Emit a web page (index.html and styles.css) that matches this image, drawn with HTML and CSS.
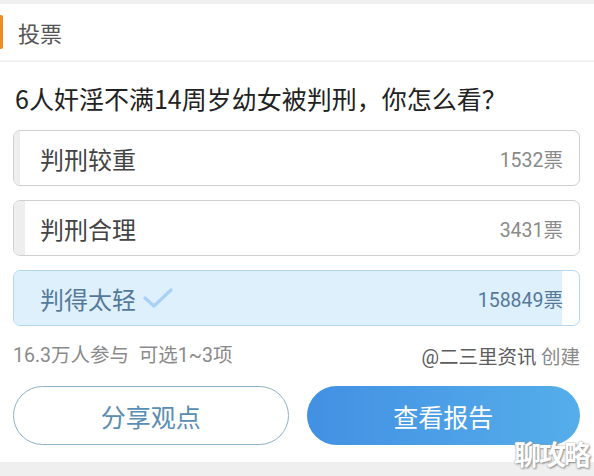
FILE: index.html
```html
<!DOCTYPE html>
<html lang="zh-CN">
<head>
  <meta charset="UTF-8">
  <meta name="viewport" content="width=device-width, initial-scale=1.0">
  <title>投票</title>
  <link rel="stylesheet" href="styles.css">
</head>
<body>

  <div class="top-band"></div>

  <!-- 标题 -->
  <div class="header">
    <span class="header-mark"></span>
    <span class="header-title">投票</span>
  </div>

  <div class="vote">
    <h1 class="question">6人奸淫不满14周岁幼女被判刑，你怎么看？</h1>

    <!-- 选项 -->
    <div class="options">
      <div class="option">
        <div class="fill" style="width: 1%"></div>
        <span class="label">判刑较重</span>
        <span class="count">1532票</span>
      </div>
      <div class="option">
        <div class="fill" style="width: 2%"></div>
        <span class="label">判刑合理</span>
        <span class="count">3431票</span>
      </div>
      <div class="option selected">
        <div class="fill" style="width: 97%"></div>
        <span class="label">判得太轻
          <svg class="check" width="30" height="22" viewBox="0 0 30 22">
            <path d="M2 11 L11 19 L28 3" fill="none" stroke="#a9d0f5" stroke-width="3.2" stroke-linecap="round" stroke-linejoin="round"/>
          </svg>
        </span>
        <span class="count">158849票</span>
      </div>
    </div>

    <div class="meta">
      <span>16.3万人参与&nbsp;&nbsp;可选1~3项</span>
      <span><span class="author">@二三里资讯</span> 创建</span>
    </div>

    <div class="actions">
      <button class="btn btn-outline">分享观点</button>
      <button class="btn btn-primary">查看报告</button>
    </div>
  </div>

  <div class="bottom-band"></div>
  <div class="watermark">聊攻略</div>

</body>
</html>
```

FILE: styles.css
```css
body {
  margin: 0;
  width: 594px;
  height: 476px;
  overflow: hidden;
  position: relative;
  background: #fff;
  font-family: "Noto Sans CJK SC", "Noto Sans", sans-serif;
}

.top-band {
  height: 4px;
  background: #efefef;
}

.header {
  height: 56px;
  display: flex;
  align-items: center;
  border-bottom: 2px solid #f2f2f2;
}

.header-mark {
  width: 3px;
  height: 34px;
  background: #f08a24;
  border-radius: 0 2px 2px 0;
}

.header-title {
  margin-left: 15px;
  font-size: 22px;
  color: #555;
}

.vote {
  padding: 0 14px 0 13px;
}

.question {
  margin: 16px 0 0 2px;
  font-size: 25px;
  font-weight: normal;
  color: #222;
  line-height: 40px;
}

.options {
  margin-top: 12px;
  display: flex;
  flex-direction: column;
  gap: 14px;
}

.option {
  position: relative;
  height: 56px;
  border: 1px solid #cfcfcf;
  border-radius: 7px;
  overflow: hidden;
  display: flex;
  align-items: center;
  justify-content: space-between;
  padding: 0 16px 0 26px;
  box-sizing: border-box;
}

.option .fill {
  position: absolute;
  left: 0;
  top: 0;
  bottom: 0;
  background: #eeeeee;
}

.option .label,
.option .count {
  position: relative;
}

.label {
  font-size: 24px;
  color: #444;
  display: flex;
  align-items: center;
}

.count {
  font-size: 19.5px;
  color: #8a8a8a;
  font-family: "Roboto", "Noto Sans CJK SC", sans-serif;
}

.option.selected {
  border-color: #b4d6ee;
}

.option.selected .fill {
  background: #def0fc;
}

.option.selected .label {
  color: #55799a;
}

.option.selected .count {
  color: #55799a;
}

.check {
  margin-left: 7px;
}

.meta {
  margin-top: 15px;
  display: flex;
  justify-content: space-between;
  font-size: 19.5px;
  color: #8a8a8a;
  line-height: 30px;
}

.meta span:first-child {
  font-family: "Roboto", "Noto Sans CJK SC", sans-serif;
}

.author {
  color: #5c5c5c;
}

.actions {
  margin-top: 13px;
  display: flex;
  gap: 18px;
}

.btn {
  flex: 1;
  height: 59px;
  border-radius: 30px;
  font-size: 25px;
  font-family: "Noto Sans CJK SC", sans-serif;
}

.btn-outline {
  background: #fff;
  border: 1.5px solid #8fb1c4;
  color: #5a8db3;
}

.btn-primary {
  border: none;
  background: linear-gradient(90deg, #4290e3, #55aeea);
  color: #fff;
}

.bottom-band {
  position: absolute;
  left: 0;
  right: 0;
  bottom: 0;
  height: 14px;
  background: #efefef;
}

/* 水印 */
.watermark {
  position: absolute;
  right: 5px;
  bottom: 3px;
  font-size: 27px;
  font-weight: bold;
  color: #fff;
  letter-spacing: -2px;
  text-shadow: 0 0 2px #999, 1px 1px 2px #888;
}
```
